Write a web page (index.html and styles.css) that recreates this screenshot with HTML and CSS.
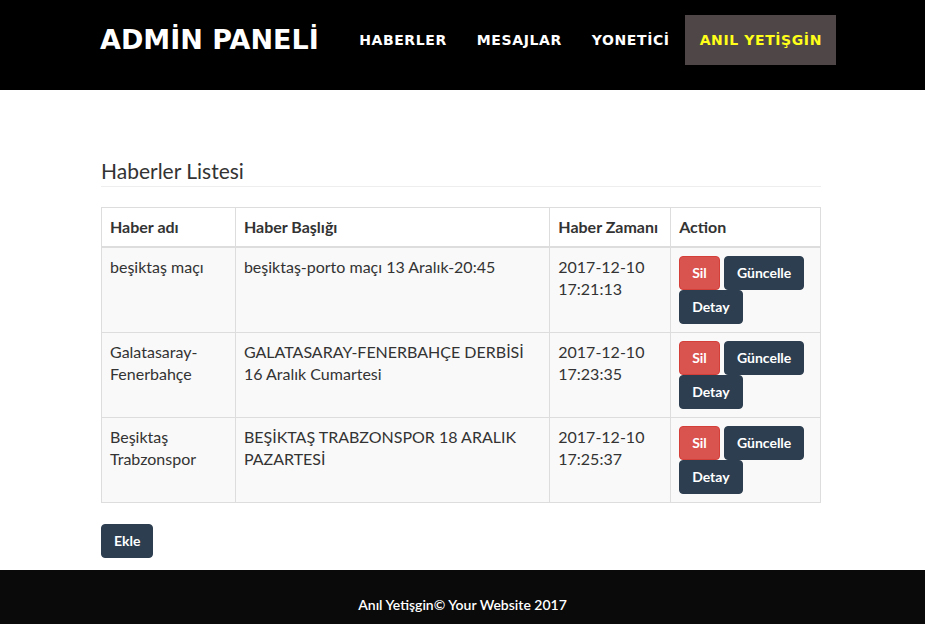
FILE: index.html
```html
<!DOCTYPE html>
<html lang="tr">
<head>
<meta charset="utf-8">
<title>Admin Paneli</title>
<link rel="stylesheet" href="styles.css">
</head>
<body>
<nav class="navbar">
  <div class="container nav-inner">
    <a class="brand" href="#">ADMİN PANELİ</a>
    <ul class="nav-links">
      <li><a href="#">HABERLER</a></li>
      <li><a href="#">MESAJLAR</a></li>
      <li><a href="#">YONETİCİ</a></li>
      <li><a class="active" href="#">ANIL YETİŞGİN</a></li>
    </ul>
  </div>
</nav>
<main class="container content">
  <h3 class="page-header">Haberler Listesi</h3>
  <table class="news-table">
    <thead>
      <tr><th class="c1">Haber adı</th><th class="c2">Haber Başlığı</th><th class="c3">Haber Zamanı</th><th class="c4">Action</th></tr>
    </thead>
    <tbody>
      <tr>
        <td>beşiktaş maçı</td>
        <td>beşiktaş-porto maçı 13 Aralık-20:45</td>
        <td>2017-12-10 17:21:13</td>
        <td><a class="btn btn-danger" href="#">Sil</a> <a class="btn btn-dark" href="#">Güncelle</a> <a class="btn btn-dark" href="#">Detay</a></td>
      </tr>
      <tr>
        <td>Galatasaray-Fenerbahçe</td>
        <td>GALATASARAY-FENERBAHÇE DERBİSİ 16 Aralık Cumartesi</td>
        <td>2017-12-10 17:23:35</td>
        <td><a class="btn btn-danger" href="#">Sil</a> <a class="btn btn-dark" href="#">Güncelle</a> <a class="btn btn-dark" href="#">Detay</a></td>
      </tr>
      <tr>
        <td>Beşiktaş Trabzonspor</td>
        <td>BEŞİKTAŞ TRABZONSPOR 18 ARALIK PAZARTESİ</td>
        <td>2017-12-10 17:25:37</td>
        <td><a class="btn btn-danger" href="#">Sil</a> <a class="btn btn-dark" href="#">Güncelle</a> <a class="btn btn-dark" href="#">Detay</a></td>
      </tr>
    </tbody>
  </table>
  <a class="btn btn-dark add-btn" href="#">Ekle</a>
</main>
<footer class="footer">Anıl Yetişgin© Your Website 2017</footer>
</body>
</html>
```
FILE: styles.css
```css
* { box-sizing: border-box; }
html, body { margin: 0; padding: 0; }
body {
  font-family: Lato, "Open Sans", sans-serif;
  font-size: 16px;
  line-height: 22px;
  color: #333;
  background: #fff;
}
a { text-decoration: none; }
.container {
  width: 720px;
  margin-left: calc(50% - 361.5px);
}
.navbar {
  background: #000;
  height: 90px;
}
.nav-inner {
  display: flex;
  align-items: center;
  justify-content: space-between;
  height: 80px;
}
.brand {
  font-family: "DejaVu Sans", sans-serif;
  font-weight: bold;
  font-size: 27px;
  color: #fff;
  letter-spacing: 0;
  margin-left: -1px;
}
.nav-links {
  list-style: none;
  display: flex;
  align-items: center;
  margin: 0 -15px 0 0;
  padding: 0;
}
.nav-links a {
  display: block;
  font-family: "DejaVu Sans", sans-serif;
  font-weight: bold;
  font-size: 14px;
  letter-spacing: 0.6px;
  color: #fff;
  padding: 15px 15px;
  line-height: 20px;
}
.nav-links a.active {
  background: #4f4747;
  color: #ffff1a;
  padding: 15px 14px 15px 15px;
}
.content {
  padding-top: 68px;
  padding-bottom: 12px;
}
.page-header {
  font-family: Lato, sans-serif;
  font-weight: normal;
  font-size: 21px;
  line-height: 26px;
  color: #333;
  margin: 0 0 20px;
  padding-bottom: 2px;
  border-bottom: 1px solid #eee;
}
.news-table {
  width: 720px;
  border-collapse: collapse;
  margin-bottom: 21px;
}
.news-table th, .news-table td {
  border: 1px solid #ddd;
  padding: 8px;
  text-align: left;
  vertical-align: top;
}
.news-table th {
  font-weight: bold;
  font-size: 16px;
  padding-top: 8px;
  padding-bottom: 8px;
  border-bottom: 2px solid #ddd;
  color: #333;
}
.news-table tbody td { background: #f9f9f9; height: 85px; }
.c1 { width: 134px; }
.c2 { width: 315px; }
.c3 { width: 121px; }
.c4 { width: 150px; }
.btn {
  display: inline-block;
  font-family: Lato, sans-serif;
  font-weight: bold;
  font-size: 14px;
  line-height: 20px;
  padding: 6px 12px;
  border: 1px solid transparent;
  border-radius: 4px;
  color: #fff;
  vertical-align: middle;
}
.btn-danger { background: #d9534f; border-color: #d43f3a; }
.btn-dark { background: #2c3e50; border-color: #2c3e50; }
.footer {
  background: #0a0a0a;
  color: #fff;
  text-align: center;
  font-family: Lato, sans-serif;
  font-size: 14px;
  font-weight: 600;
  height: 54px;
  padding-top: 24px;
  line-height: 22px;
}
```
